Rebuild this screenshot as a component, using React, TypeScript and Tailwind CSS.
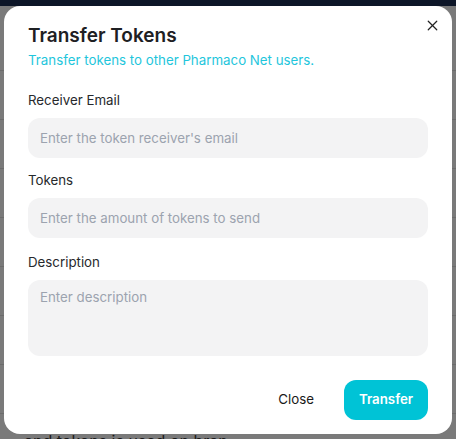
import React from 'react';
import { X } from 'lucide-react';

const rows = [
  { left: '', right: '' },
  { left: '', right: '2' },
  { left: '', right: '' },
  { left: '', right: '2' },
  { left: '', right: '' },
  { left: '', right: '2' },
  { left: '', right: '2' },
  { left: '', right: '' },
];

const Field: React.FC<{ label: string; placeholder: string; multiline?: boolean }> = ({
  label,
  placeholder,
  multiline,
}) => (
  <div className="flex flex-col">
    <label className="text-[13.3px] leading-5 text-[#27292c] mb-2">{label}</label>
    {multiline ? (
      <textarea
        placeholder={placeholder}
        className="h-[76px] w-full resize-none rounded-xl bg-[#f3f3f4] px-3 py-2 text-[13.3px] text-gray-800 placeholder:text-[#9ca3af] outline-none"
      />
    ) : (
      <input
        placeholder={placeholder}
        className="h-10 w-full rounded-xl bg-[#f3f3f4] px-3 text-[13.3px] text-gray-800 placeholder:text-[#9ca3af] outline-none"
      />
    )}
  </div>
);

export default function App() {
  return (
    <div
      className="relative h-[439px] w-[456px] overflow-hidden bg-[#7a7a7a]"
      style={{ fontFamily: 'Inter, "Noto Sans", sans-serif' }}
    >
      {/* Page behind the overlay */}
      <div className="h-[6px] bg-[#0d1628]" />
      <div className="flex flex-col pt-[64px]">
        {rows.map((r, i) => (
          <div key={i} className="flex h-[49px] items-center justify-between border-t border-[#6c6c6c] px-1 text-sm text-[#1a1a1a]">
            <span>{r.left}</span>
            <span>{r.right}</span>
          </div>
        ))}
      </div>
      <div className="absolute bottom-[-12px] left-[24px] text-base leading-5 text-[#1a1a1a]">and tokens is used on bran</div>

      {/* Modal */}
      <div className="absolute left-[4px] top-[6px] w-[448px] rounded-2xl bg-white px-6 pt-4 pb-[14px]">
        <button className="absolute right-[11px] top-[11px] text-[#222]">
          <X size={17} strokeWidth={1.7} />
        </button>
        <h2 className="text-[19px] font-semibold leading-7 text-[#1e2023]">Transfer Tokens</h2>
        <p className="text-[13.3px] leading-5 text-[#1fc6dc]">Transfer tokens to other Pharmaco Net users.</p>

        <div className="mt-5 flex flex-col">
          <Field label="Receiver Email" placeholder="Enter the token receiver's email" />
          <div className="mt-3">
            <Field label="Tokens" placeholder="Enter the amount of tokens to send" />
          </div>
          <div className="mt-[14px]">
            <Field label="Description" placeholder="Enter description" multiline />
          </div>
        </div>

        <div className="mt-6 flex items-center justify-end gap-[14px]">
          <button className="h-10 px-4 text-[13.3px] text-[#1a1a1a]">Close</button>
          <button className="h-10 w-[84px] rounded-xl bg-[#00c3d6] text-[13.3px] font-semibold text-white">Transfer</button>
        </div>
      </div>
    </div>
  );
}
